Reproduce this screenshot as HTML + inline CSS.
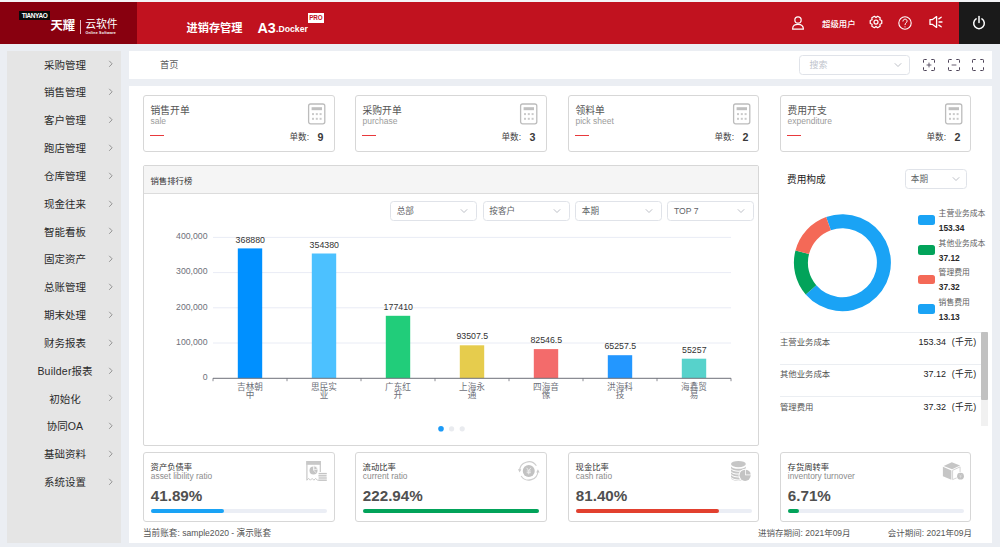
<!DOCTYPE html>
<html lang="zh-CN"><head><meta charset="utf-8"><title>天耀云软件 - 进销存管理</title>
<style>
*{box-sizing:border-box;margin:0;padding:0}
html,body{width:1000px;height:547px;overflow:hidden;background:#ebeef3;font-family:"Liberation Sans","Noto Sans CJK SC",sans-serif;color:#333}
.a{position:absolute}
.t{position:absolute;white-space:nowrap;line-height:14px;height:14px}
.hdr{left:0;top:2px;width:1000px;height:42px;background:#c1121f}
.logo{left:0;top:2px;width:137px;height:42px;background:#88000f}
.pwr{left:959px;top:2px;width:41px;height:42px;background:#1a1a1a}
.side{left:7px;top:50.500px;width:114.200px;height:492.800px;background:#e5e5e5}
.mi{position:absolute;left:7px;width:116px;text-align:center;font-size:10.5px;color:#2b2b2b;line-height:14px;height:14px;white-space:nowrap}
.panel{background:#fff}
.card{position:absolute;background:#fff;border:1px solid #d7d7d7;border-radius:3px}
.sel{position:absolute;background:#fff;border:1px solid #e0e3e9;border-radius:3.5px;height:20.200px}
.g{color:#999}
</style></head><body>

<div class="a" style="left:0;top:0;width:1000px;height:2px;background:#f4f4f6"></div>
<div class="a hdr"></div><div class="a logo"></div><div class="a pwr"></div>
<div class="a" style="left:19px;top:11px;width:31px;height:9px;background:#0a0a0a"></div>
<div class="t" style="left:19px;top:11px;width:31px;height:9px;line-height:9px;font-size:6.5px;font-weight:bold;color:#fff;text-align:center;letter-spacing:-0.45px">TIANYAO</div>
<div class="t" style="left:50.5px;top:19px;font-size:12.3px;font-weight:bold;color:#fff;line-height:15px;height:15px">天耀</div>
<div class="a" style="left:80px;top:20px;width:1px;height:14px;background:#e9b9bd"></div>
<div class="t" style="left:85.2px;top:17px;font-size:10.8px;color:#fff;line-height:15px;height:15px">云软件</div>
<div class="t" style="left:85.4px;top:30.5px;font-size:3.6px;font-weight:bold;color:#fff;line-height:5px;height:5px;letter-spacing:0.22px">Online Software</div>
<div class="t" style="left:186.5px;top:20.5px;font-size:11.2px;font-weight:bold;color:#fff;line-height:15px;height:15px">进销存管理</div>
<div class="t" style="left:257.5px;top:19px;font-size:14.3px;font-weight:bold;color:#fff;line-height:18px;height:18px">A3</div>
<div class="t" style="left:276px;top:23px;font-size:8.7px;font-weight:bold;color:#fff;line-height:12px;height:12px">.Docker</div>
<div class="a" style="left:307.6px;top:12.5px;width:16.7px;height:10px;background:#fff"></div>
<div class="t" style="left:307.6px;top:12.5px;width:16.7px;height:10px;line-height:10.5px;font-size:6.3px;font-weight:bold;color:#c1121f;text-align:center;letter-spacing:-0.1px">PRO</div>
<svg class="a" style="left:790px;top:15px" width="16" height="16" viewBox="0 0 16 16" fill="none" stroke="#fff" stroke-width="1.2"><circle cx="8" cy="5.050" r="3.150"/><path d="M2.6 14.2 C2.6 10.4 5 9.3 8 9.3 C11 9.3 13.4 10.4 13.4 14.2 Z" stroke-linejoin="round"/></svg>
<div class="t" style="left:822.100px;top:16.5px;font-size:8.4px;font-weight:500;color:#fff;line-height:14px;height:14px">超级用户</div>
<svg class="a" style="left:867.5px;top:14.2px" width="16" height="16" viewBox="0 0 16 16" fill="none" stroke="#fff" stroke-width="1.25" stroke-linejoin="round"><path d="M11.90 5.75 L13.76 6.52 L13.76 9.48 L11.90 10.25 L11.90 10.25 L12.16 12.25 L9.60 13.73 L8.00 12.50 L8.00 12.50 L6.40 13.73 L3.84 12.25 L4.10 10.25 L4.10 10.25 L2.24 9.48 L2.24 6.52 L4.10 5.75 L4.10 5.75 L3.84 3.75 L6.40 2.27 L8.00 3.50 L8.00 3.50 L9.60 2.27 L12.16 3.75 L11.90 5.75Z"/><circle cx="8" cy="8" r="2"/></svg>
<svg class="a" style="left:897.2px;top:14.6px" width="16" height="16" viewBox="0 0 16 16" fill="none" stroke="#fff" stroke-width="1.1"><circle cx="8" cy="8" r="6.2"/><path d="M5.9 6.100 C5.9 3.400 10.1 3.400 10.1 6.100 C10.1 7.800 8 7.800 8 9.700" stroke-linecap="round" stroke-width="1"/><circle cx="8" cy="11.800" r="0.6" fill="#fff" stroke="none"/></svg>
<svg class="a" style="left:927.5px;top:14.2px" width="16" height="16" viewBox="0 0 16 16" fill="none" stroke="#fff" stroke-width="1.3" stroke-linejoin="round"><path d="M2 5.6 H4.6 L8.6 2.6 V13.4 L4.6 10.4 H2 Z"/><path d="M11 8 H14 M10.8 4.9 L13.2 3.2 M10.8 11.1 L13.2 12.8" stroke-linecap="round"/></svg>
<svg class="a" style="left:970.7px;top:14.6px" width="16" height="16" viewBox="0 0 16 16" fill="none" stroke="#fff" stroke-width="1.5" stroke-linecap="round"><path d="M5.1 3.9 A5.3 5.3 0 1 0 10.9 3.9"/><path d="M8 1.6 V7.4"/></svg>
<div class="a side"></div>
<div class="mi" style="top:57.6px">采购管理</div>
<svg class="a" style="left:107px;top:59.4px" width="8" height="10" viewBox="0 0 8 10" fill="none" stroke="#8a8a8a" stroke-width="0.9"><path d="M2.2 1.8 L5.1 4.8 L2.2 7.8"/></svg>
<div class="mi" style="top:85.4px">销售管理</div>
<svg class="a" style="left:107px;top:87.2px" width="8" height="10" viewBox="0 0 8 10" fill="none" stroke="#8a8a8a" stroke-width="0.9"><path d="M2.2 1.8 L5.1 4.8 L2.2 7.8"/></svg>
<div class="mi" style="top:113.3px">客户管理</div>
<svg class="a" style="left:107px;top:115.1px" width="8" height="10" viewBox="0 0 8 10" fill="none" stroke="#8a8a8a" stroke-width="0.9"><path d="M2.2 1.8 L5.1 4.8 L2.2 7.8"/></svg>
<div class="mi" style="top:141.1px">跑店管理</div>
<svg class="a" style="left:107px;top:142.9px" width="8" height="10" viewBox="0 0 8 10" fill="none" stroke="#8a8a8a" stroke-width="0.9"><path d="M2.2 1.8 L5.1 4.8 L2.2 7.8"/></svg>
<div class="mi" style="top:168.9px">仓库管理</div>
<svg class="a" style="left:107px;top:170.7px" width="8" height="10" viewBox="0 0 8 10" fill="none" stroke="#8a8a8a" stroke-width="0.9"><path d="M2.2 1.8 L5.1 4.8 L2.2 7.8"/></svg>
<div class="mi" style="top:196.7px">现金往来</div>
<svg class="a" style="left:107px;top:198.5px" width="8" height="10" viewBox="0 0 8 10" fill="none" stroke="#8a8a8a" stroke-width="0.9"><path d="M2.2 1.8 L5.1 4.8 L2.2 7.8"/></svg>
<div class="mi" style="top:224.6px">智能看板</div>
<svg class="a" style="left:107px;top:226.4px" width="8" height="10" viewBox="0 0 8 10" fill="none" stroke="#8a8a8a" stroke-width="0.9"><path d="M2.2 1.8 L5.1 4.8 L2.2 7.8"/></svg>
<div class="mi" style="top:252.4px">固定资产</div>
<svg class="a" style="left:107px;top:254.2px" width="8" height="10" viewBox="0 0 8 10" fill="none" stroke="#8a8a8a" stroke-width="0.9"><path d="M2.2 1.8 L5.1 4.8 L2.2 7.8"/></svg>
<div class="mi" style="top:280.2px">总账管理</div>
<svg class="a" style="left:107px;top:282.0px" width="8" height="10" viewBox="0 0 8 10" fill="none" stroke="#8a8a8a" stroke-width="0.9"><path d="M2.2 1.8 L5.1 4.8 L2.2 7.8"/></svg>
<div class="mi" style="top:308.1px">期末处理</div>
<svg class="a" style="left:107px;top:309.9px" width="8" height="10" viewBox="0 0 8 10" fill="none" stroke="#8a8a8a" stroke-width="0.9"><path d="M2.2 1.8 L5.1 4.8 L2.2 7.8"/></svg>
<div class="mi" style="top:335.9px">财务报表</div>
<svg class="a" style="left:107px;top:337.7px" width="8" height="10" viewBox="0 0 8 10" fill="none" stroke="#8a8a8a" stroke-width="0.9"><path d="M2.2 1.8 L5.1 4.8 L2.2 7.8"/></svg>
<div class="mi" style="top:363.7px"><span style="letter-spacing:0.22px">Builder</span>报表</div>
<svg class="a" style="left:107px;top:365.5px" width="8" height="10" viewBox="0 0 8 10" fill="none" stroke="#8a8a8a" stroke-width="0.9"><path d="M2.2 1.8 L5.1 4.8 L2.2 7.8"/></svg>
<div class="mi" style="top:391.6px">初始化</div>
<svg class="a" style="left:107px;top:393.4px" width="8" height="10" viewBox="0 0 8 10" fill="none" stroke="#8a8a8a" stroke-width="0.9"><path d="M2.2 1.8 L5.1 4.8 L2.2 7.8"/></svg>
<div class="mi" style="top:419.4px">协同<span style="letter-spacing:0.2px">OA</span></div>
<svg class="a" style="left:107px;top:421.2px" width="8" height="10" viewBox="0 0 8 10" fill="none" stroke="#8a8a8a" stroke-width="0.9"><path d="M2.2 1.8 L5.1 4.8 L2.2 7.8"/></svg>
<div class="mi" style="top:447.2px">基础资料</div>
<svg class="a" style="left:107px;top:449.0px" width="8" height="10" viewBox="0 0 8 10" fill="none" stroke="#8a8a8a" stroke-width="0.9"><path d="M2.2 1.8 L5.1 4.8 L2.2 7.8"/></svg>
<div class="mi" style="top:475.0px">系统设置</div>
<svg class="a" style="left:107px;top:476.8px" width="8" height="10" viewBox="0 0 8 10" fill="none" stroke="#8a8a8a" stroke-width="0.9"><path d="M2.2 1.8 L5.1 4.8 L2.2 7.8"/></svg>
<div class="a panel" style="left:129px;top:51px;width:863px;height:28px"></div>
<div class="t" style="left:160px;top:58px;font-size:9.2px;color:#606060">首页</div>
<div class="sel" style="left:798.5px;top:55.100px;width:111.300px;height:20px"></div>
<div class="t" style="left:809.5px;top:58.3px;font-size:9px;color:#c0c4cc">搜索</div>
<svg class="a" style="left:892.7px;top:61.0px" width="10" height="8" viewBox="0 0 10 8" fill="none" stroke="#b4b8c0" stroke-width="0.9"><path d="M1.8 2.3 L5 5.5 L8.2 2.3"/></svg>
<svg class="a" style="left:922.1px;top:57.7px" width="14" height="14" viewBox="0 0 14 14" fill="none" stroke="#4a4055" stroke-width="1" stroke-linejoin="round"><path d="M1.500 4.700 V2.300 Q1.500 1.500 2.300 1.500 H4.700 M9.300 1.500 H11.700 Q12.500 1.500 12.500 2.300 V4.700 M12.500 9.300 V11.700 Q12.500 12.500 11.700 12.500 H9.300 M4.700 12.500 H2.300 Q1.500 12.500 1.500 11.700 V9.300"/><path d="M4.600 7 H9.400 M7 4.600 V9.400" stroke-width="0.85"/></svg>
<svg class="a" style="left:946.7px;top:57.7px" width="14" height="14" viewBox="0 0 14 14" fill="none" stroke="#4a4055" stroke-width="1" stroke-linejoin="round"><path d="M1.500 4.700 V2.300 Q1.500 1.500 2.300 1.500 H4.700 M9.300 1.500 H11.700 Q12.500 1.500 12.500 2.300 V4.700 M12.500 9.300 V11.700 Q12.500 12.500 11.700 12.500 H9.300 M4.700 12.500 H2.300 Q1.500 12.500 1.500 11.700 V9.300"/><path d="M4.600 7 H9.400" stroke-width="0.85"/></svg>
<svg class="a" style="left:970.7px;top:57.7px" width="14" height="14" viewBox="0 0 14 14" fill="none" stroke="#4a4055" stroke-width="1" stroke-linejoin="round"><path d="M1.500 4.700 V2.300 Q1.500 1.500 2.300 1.500 H4.700 M9.300 1.500 H11.700 Q12.500 1.500 12.500 2.300 V4.700 M12.500 9.300 V11.700 Q12.500 12.500 11.700 12.500 H9.300 M4.700 12.500 H2.300 Q1.500 12.500 1.500 11.700 V9.300"/></svg>
<div class="a panel" style="left:129px;top:86px;width:863px;height:457px"></div>
<div class="card" style="left:143px;top:95px;width:192.0px;height:57px"></div>
<div class="t" style="left:150.5px;top:103.5px;font-size:9.8px;color:#555">销售开单</div>
<div class="t g" style="left:150.5px;top:114.1px;font-size:8.5px;color:#9c9c9c">sale</div>
<div class="a" style="left:150.4px;top:134.6px;width:14px;height:1.6px;background:#e8393c"></div>
<svg class="a" style="left:305.8px;top:101px" width="22" height="26" viewBox="0 0 22 26"><rect x="2.6" y="3" width="16.200" height="19.800" rx="2" fill="none" stroke="#bcbcbc" stroke-width="1.300"/><rect x="5.6" y="6.200" width="10.400" height="3" fill="#c0c0c0"/><g fill="#cacaca"><rect x="6" y="12.100" width="2" height="2"/><rect x="9.800" y="12.100" width="2" height="2"/><rect x="13.600" y="12.100" width="2" height="2"/><rect x="6" y="16.800" width="2" height="2"/><rect x="9.800" y="16.800" width="2" height="2"/><rect x="13.600" y="16.800" width="2" height="2"/></g></svg>
<div class="t" style="left:289.5px;top:130.3px;font-size:8.6px;color:#444">单数:</div>
<div class="t" style="left:317.6px;top:128.5px;font-size:10.700px;font-weight:bold;color:#3a3a3a;line-height:16px;height:16px">9</div>
<div class="card" style="left:355px;top:95px;width:192.0px;height:57px"></div>
<div class="t" style="left:362.5px;top:103.5px;font-size:9.8px;color:#555">采购开单</div>
<div class="t g" style="left:362.5px;top:114.1px;font-size:8.5px;color:#9c9c9c">purchase</div>
<div class="a" style="left:362.4px;top:134.6px;width:14px;height:1.6px;background:#e8393c"></div>
<svg class="a" style="left:517.8px;top:101px" width="22" height="26" viewBox="0 0 22 26"><rect x="2.6" y="3" width="16.200" height="19.800" rx="2" fill="none" stroke="#bcbcbc" stroke-width="1.300"/><rect x="5.6" y="6.200" width="10.400" height="3" fill="#c0c0c0"/><g fill="#cacaca"><rect x="6" y="12.100" width="2" height="2"/><rect x="9.800" y="12.100" width="2" height="2"/><rect x="13.600" y="12.100" width="2" height="2"/><rect x="6" y="16.800" width="2" height="2"/><rect x="9.800" y="16.800" width="2" height="2"/><rect x="13.600" y="16.800" width="2" height="2"/></g></svg>
<div class="t" style="left:501.5px;top:130.3px;font-size:8.6px;color:#444">单数:</div>
<div class="t" style="left:529.6px;top:128.5px;font-size:10.700px;font-weight:bold;color:#3a3a3a;line-height:16px;height:16px">3</div>
<div class="card" style="left:568px;top:95px;width:191.0px;height:57px"></div>
<div class="t" style="left:575.5px;top:103.5px;font-size:9.8px;color:#555">领料单</div>
<div class="t g" style="left:575.5px;top:114.1px;font-size:8.5px;color:#9c9c9c">pick sheet</div>
<div class="a" style="left:575.4px;top:134.6px;width:14px;height:1.6px;background:#e8393c"></div>
<svg class="a" style="left:730.8px;top:101px" width="22" height="26" viewBox="0 0 22 26"><rect x="2.6" y="3" width="16.200" height="19.800" rx="2" fill="none" stroke="#bcbcbc" stroke-width="1.300"/><rect x="5.6" y="6.200" width="10.400" height="3" fill="#c0c0c0"/><g fill="#cacaca"><rect x="6" y="12.100" width="2" height="2"/><rect x="9.800" y="12.100" width="2" height="2"/><rect x="13.600" y="12.100" width="2" height="2"/><rect x="6" y="16.800" width="2" height="2"/><rect x="9.800" y="16.800" width="2" height="2"/><rect x="13.600" y="16.800" width="2" height="2"/></g></svg>
<div class="t" style="left:714.5px;top:130.3px;font-size:8.6px;color:#444">单数:</div>
<div class="t" style="left:742.6px;top:128.5px;font-size:10.700px;font-weight:bold;color:#3a3a3a;line-height:16px;height:16px">2</div>
<div class="card" style="left:780px;top:95px;width:191.3px;height:57px"></div>
<div class="t" style="left:787.5px;top:103.5px;font-size:9.8px;color:#555">费用开支</div>
<div class="t g" style="left:787.5px;top:114.1px;font-size:8.5px;color:#9c9c9c">expenditure</div>
<div class="a" style="left:787.4px;top:134.6px;width:14px;height:1.6px;background:#e8393c"></div>
<svg class="a" style="left:942.8px;top:101px" width="22" height="26" viewBox="0 0 22 26"><rect x="2.6" y="3" width="16.200" height="19.800" rx="2" fill="none" stroke="#bcbcbc" stroke-width="1.300"/><rect x="5.6" y="6.200" width="10.400" height="3" fill="#c0c0c0"/><g fill="#cacaca"><rect x="6" y="12.100" width="2" height="2"/><rect x="9.800" y="12.100" width="2" height="2"/><rect x="13.600" y="12.100" width="2" height="2"/><rect x="6" y="16.800" width="2" height="2"/><rect x="9.800" y="16.800" width="2" height="2"/><rect x="13.600" y="16.800" width="2" height="2"/></g></svg>
<div class="t" style="left:926.5px;top:130.3px;font-size:8.6px;color:#444">单数:</div>
<div class="t" style="left:954.6px;top:128.5px;font-size:10.700px;font-weight:bold;color:#3a3a3a;line-height:16px;height:16px">2</div>
<div class="card" style="left:143px;top:165px;width:616px;height:281px;border-radius:2px"></div>
<div class="a" style="left:144px;top:166px;width:614px;height:28px;background:#f5f5f5;border-bottom:1px solid #dcdcdc"></div>
<div class="t" style="left:150.5px;top:173.500px;font-size:8.4px;color:#333">销售排行榜</div>
<div class="sel" style="left:390.2px;top:200.500px;width:86.800px"></div>
<div class="t" style="left:396.7px;top:203.6px;font-size:8.6px;color:#606266">总部</div>
<svg class="a" style="left:459.2px;top:206.7px" width="10" height="8" viewBox="0 0 10 8" fill="none" stroke="#b4b8c0" stroke-width="0.9"><path d="M1.8 2.3 L5 5.5 L8.2 2.3"/></svg>
<div class="sel" style="left:482.8px;top:200.500px;width:86.800px"></div>
<div class="t" style="left:489.3px;top:203.6px;font-size:8.6px;color:#606266">按客户</div>
<svg class="a" style="left:551.8px;top:206.7px" width="10" height="8" viewBox="0 0 10 8" fill="none" stroke="#b4b8c0" stroke-width="0.9"><path d="M1.8 2.3 L5 5.5 L8.2 2.3"/></svg>
<div class="sel" style="left:575.3px;top:200.500px;width:86.800px"></div>
<div class="t" style="left:581.8px;top:203.6px;font-size:8.6px;color:#606266">本期</div>
<svg class="a" style="left:644.3px;top:206.7px" width="10" height="8" viewBox="0 0 10 8" fill="none" stroke="#b4b8c0" stroke-width="0.9"><path d="M1.8 2.3 L5 5.5 L8.2 2.3"/></svg>
<div class="sel" style="left:667.4px;top:200.500px;width:86.800px"></div>
<div class="t" style="left:673.9px;top:203.6px;font-size:8.6px;color:#606266">TOP 7</div>
<svg class="a" style="left:736.4px;top:206.7px" width="10" height="8" viewBox="0 0 10 8" fill="none" stroke="#b4b8c0" stroke-width="0.9"><path d="M1.8 2.3 L5 5.5 L8.2 2.3"/></svg>
<svg class="a" style="left:0;top:0" width="1000" height="547" viewBox="0 0 1000 547" font-family='&quot;Liberation Sans&quot;, &quot;Noto Sans CJK SC&quot;, sans-serif'><path d="M213 343.0 H731" stroke="#e9ecf5" stroke-width="1" fill="none"/><path d="M213 307.8 H731" stroke="#e9ecf5" stroke-width="1" fill="none"/><path d="M213 272.6 H731" stroke="#e9ecf5" stroke-width="1" fill="none"/><path d="M213 237.4 H731" stroke="#e9ecf5" stroke-width="1" fill="none"/><text x="207.500" y="380.0" font-size="8.7" fill="#6e7079" text-anchor="end">0</text><text x="207.500" y="344.8" font-size="8.7" fill="#6e7079" text-anchor="end">100,000</text><text x="207.500" y="309.6" font-size="8.7" fill="#6e7079" text-anchor="end">200,000</text><text x="207.500" y="274.4" font-size="8.7" fill="#6e7079" text-anchor="end">300,000</text><text x="207.500" y="239.2" font-size="8.7" fill="#6e7079" text-anchor="end">400,000</text><rect x="237.8" y="248.4" width="24.4" height="129.8" fill="#0090ff"/><text x="250.3" y="242.5" font-size="8.8" fill="#333" text-anchor="middle">368880</text><text x="250.0" y="389.8" font-size="8.6" fill="#6e7079" text-anchor="middle">吉林朝</text><text x="250.0" y="398.1" font-size="8.6" fill="#6e7079" text-anchor="middle">中</text><rect x="311.8" y="253.5" width="24.4" height="124.7" fill="#4cc1ff"/><text x="324.3" y="247.6" font-size="8.8" fill="#333" text-anchor="middle">354380</text><text x="324.0" y="389.8" font-size="8.6" fill="#6e7079" text-anchor="middle">思民实</text><text x="324.0" y="398.1" font-size="8.6" fill="#6e7079" text-anchor="middle">业</text><rect x="385.8" y="315.8" width="24.4" height="62.4" fill="#21cd7a"/><text x="398.3" y="309.9" font-size="8.8" fill="#333" text-anchor="middle">177410</text><text x="398.0" y="389.8" font-size="8.6" fill="#6e7079" text-anchor="middle">广东红</text><text x="398.0" y="398.1" font-size="8.6" fill="#6e7079" text-anchor="middle">升</text><rect x="459.8" y="345.3" width="24.4" height="32.9" fill="#e6cc4d"/><text x="472.3" y="339.4" font-size="8.8" fill="#333" text-anchor="middle">93507.5</text><text x="472.0" y="389.8" font-size="8.6" fill="#6e7079" text-anchor="middle">上海永</text><text x="472.0" y="398.1" font-size="8.6" fill="#6e7079" text-anchor="middle">通</text><rect x="533.8" y="349.1" width="24.4" height="29.1" fill="#f36b6b"/><text x="546.3" y="343.2" font-size="8.8" fill="#333" text-anchor="middle">82546.5</text><text x="546.0" y="389.8" font-size="8.6" fill="#6e7079" text-anchor="middle">四海音</text><text x="546.0" y="398.1" font-size="8.6" fill="#6e7079" text-anchor="middle">像</text><rect x="607.8" y="355.2" width="24.4" height="23.0" fill="#2397ff"/><text x="620.3" y="349.3" font-size="8.8" fill="#333" text-anchor="middle">65257.5</text><text x="620.0" y="389.8" font-size="8.6" fill="#6e7079" text-anchor="middle">洪海科</text><text x="620.0" y="398.1" font-size="8.6" fill="#6e7079" text-anchor="middle">技</text><rect x="681.8" y="358.7" width="24.4" height="19.5" fill="#57d2cb"/><text x="694.3" y="352.8" font-size="8.8" fill="#333" text-anchor="middle">55257</text><text x="694.0" y="389.8" font-size="8.6" fill="#6e7079" text-anchor="middle">海鑫贸</text><text x="694.0" y="398.1" font-size="8.6" fill="#6e7079" text-anchor="middle">易</text><rect x="213" y="377.800" width="518" height="1" fill="#6e7079"/><path d="M213.0 378.2 V381.2" stroke="#6e7079" stroke-width="0.8" fill="none"/><path d="M287.0 378.2 V381.2" stroke="#6e7079" stroke-width="0.8" fill="none"/><path d="M361.0 378.2 V381.2" stroke="#6e7079" stroke-width="0.8" fill="none"/><path d="M435.0 378.2 V381.2" stroke="#6e7079" stroke-width="0.8" fill="none"/><path d="M509.0 378.2 V381.2" stroke="#6e7079" stroke-width="0.8" fill="none"/><path d="M583.0 378.2 V381.2" stroke="#6e7079" stroke-width="0.8" fill="none"/><path d="M657.0 378.2 V381.2" stroke="#6e7079" stroke-width="0.8" fill="none"/><path d="M731.0 378.2 V381.2" stroke="#6e7079" stroke-width="0.8" fill="none"/><circle cx="441" cy="428.800" r="2.800" fill="#1b9af7"/><circle cx="451.600" cy="428.800" r="2.600" fill="#e9ebef"/><circle cx="462.200" cy="428.800" r="2.600" fill="#e9ebef"/><path d="M826.11 217.02 A48.5 48.5 0 1 1 805.72 294.43 L816.31 285.27 A34.5 34.5 0 1 0 830.82 230.20 Z" fill="#1aa3f5"/><path d="M805.72 294.43 A48.5 48.5 0 0 1 795.47 250.47 L809.02 254.00 A34.5 34.5 0 0 0 816.31 285.27 Z" fill="#02a35a"/><path d="M795.47 250.47 A48.5 48.5 0 0 1 826.11 217.02 L830.82 230.20 A34.5 34.5 0 0 0 809.02 254.00 Z" fill="#f46957"/></svg>
<div class="a" style="left:918px;top:215.4px;width:17px;height:9.6px;border-radius:2.5px;background:#1aa3f5"></div>
<div class="t" style="left:938.6px;top:206.9px;font-size:7.8px;color:#606060">主营业务成本</div>
<div class="t" style="left:938.8px;top:221.2px;font-size:8.4px;color:#2a2a2a;font-weight:bold">153.34</div>
<div class="a" style="left:918px;top:245.0px;width:17px;height:9.6px;border-radius:2.5px;background:#02a35a"></div>
<div class="t" style="left:938.6px;top:236.5px;font-size:7.8px;color:#606060">其他业务成本</div>
<div class="t" style="left:938.8px;top:250.8px;font-size:8.4px;color:#2a2a2a;font-weight:bold">37.12</div>
<div class="a" style="left:918px;top:274.5px;width:17px;height:9.6px;border-radius:2.5px;background:#f46957"></div>
<div class="t" style="left:938.6px;top:266.0px;font-size:7.8px;color:#606060">管理费用</div>
<div class="t" style="left:938.8px;top:280.3px;font-size:8.4px;color:#2a2a2a;font-weight:bold">37.32</div>
<div class="a" style="left:918px;top:304.1px;width:17px;height:9.6px;border-radius:2.5px;background:#1aa3f5"></div>
<div class="t" style="left:938.6px;top:295.6px;font-size:7.8px;color:#606060">销售费用</div>
<div class="t" style="left:938.8px;top:309.9px;font-size:8.4px;color:#2a2a2a;font-weight:bold">13.13</div>
<div class="t" style="left:787px;top:172.5px;font-size:9.7px;color:#1a1a1a;font-weight:400">费用构成</div>
<div class="sel" style="left:905px;top:168.900px;width:62px;height:20px"></div>
<div class="t" style="left:910.8px;top:172.300px;font-size:8.6px;color:#606266">本期</div>
<svg class="a" style="left:950.5px;top:175.3px" width="10" height="8" viewBox="0 0 10 8" fill="none" stroke="#b4b8c0" stroke-width="0.9"><path d="M1.8 2.3 L5 5.5 L8.2 2.3"/></svg>
<div class="a" style="left:780px;top:332.0px;width:201px;height:1px;background:#ebeef2"></div>
<div class="t" style="left:780px;top:335.3px;font-size:8.4px;color:#555">主营业务成本</div>
<div class="t" style="left:880px;width:66px;text-align:right;top:335.3px;font-size:9px;color:#222">153.34</div>
<div class="t" style="left:951.8px;top:335.3px;font-size:8.8px;color:#222;letter-spacing:0.3px">(千元)</div>
<div class="a" style="left:780px;top:364.1px;width:201px;height:1px;background:#ebeef2"></div>
<div class="t" style="left:780px;top:367.4px;font-size:8.4px;color:#555">其他业务成本</div>
<div class="t" style="left:880px;width:66px;text-align:right;top:367.4px;font-size:9px;color:#222">37.12</div>
<div class="t" style="left:951.8px;top:367.4px;font-size:8.8px;color:#222;letter-spacing:0.3px">(千元)</div>
<div class="a" style="left:780px;top:396.2px;width:201px;height:1px;background:#ebeef2"></div>
<div class="t" style="left:780px;top:399.5px;font-size:8.4px;color:#555">管理费用</div>
<div class="t" style="left:880px;width:66px;text-align:right;top:399.5px;font-size:9px;color:#222">37.32</div>
<div class="t" style="left:951.8px;top:399.5px;font-size:8.8px;color:#222;letter-spacing:0.3px">(千元)</div>
<div class="a" style="left:981.4px;top:332px;width:6.6px;height:93.6px;background:#f1f1f1"></div>
<div class="a" style="left:981.4px;top:332px;width:6.6px;height:68.4px;background:#c1c1c1;border-radius:1px"></div>
<div class="card" style="left:143px;top:451.500px;width:192.0px;height:70.300px"></div>
<div class="t" style="left:150.6px;top:460.1px;font-size:8.300px;color:#333">资产负债率</div>
<div class="t" style="left:150.8px;top:469.4px;font-size:8.4px;color:#8c8c8c">asset libility ratio</div>
<div class="t" style="left:150.8px;top:485.5px;font-size:15.2px;font-weight:bold;color:#505050;line-height:20px;height:20px">41.89%</div>
<div class="a" style="left:150.7px;top:508.9px;width:176px;height:3.7px;border-radius:2px;background:#ebeef5"></div>
<div class="a" style="left:150.7px;top:508.9px;width:73.7px;height:3.7px;border-radius:2px;background:#1aa3f5"></div>
<div class="card" style="left:355px;top:451.500px;width:192.0px;height:70.300px"></div>
<div class="t" style="left:362.6px;top:460.1px;font-size:8.300px;color:#333">流动比率</div>
<div class="t" style="left:362.8px;top:469.4px;font-size:8.4px;color:#8c8c8c">current ratio</div>
<div class="t" style="left:362.8px;top:485.5px;font-size:15.2px;font-weight:bold;color:#505050;line-height:20px;height:20px">222.94%</div>
<div class="a" style="left:362.7px;top:508.9px;width:176px;height:3.7px;border-radius:2px;background:#ebeef5"></div>
<div class="a" style="left:362.7px;top:508.9px;width:176.0px;height:3.7px;border-radius:2px;background:#02a35a"></div>
<div class="card" style="left:568px;top:451.500px;width:191.0px;height:70.300px"></div>
<div class="t" style="left:575.6px;top:460.1px;font-size:8.300px;color:#333">现金比率</div>
<div class="t" style="left:575.8px;top:469.4px;font-size:8.4px;color:#8c8c8c">cash ratio</div>
<div class="t" style="left:575.8px;top:485.5px;font-size:15.2px;font-weight:bold;color:#505050;line-height:20px;height:20px">81.40%</div>
<div class="a" style="left:575.7px;top:508.9px;width:176px;height:3.7px;border-radius:2px;background:#ebeef5"></div>
<div class="a" style="left:575.7px;top:508.9px;width:143.3px;height:3.7px;border-radius:2px;background:#e2402f"></div>
<div class="card" style="left:780px;top:451.500px;width:191.3px;height:70.300px"></div>
<div class="t" style="left:787.6px;top:460.1px;font-size:8.300px;color:#333">存货周转率</div>
<div class="t" style="left:787.8px;top:469.4px;font-size:8.4px;color:#8c8c8c">inventory turnover</div>
<div class="t" style="left:787.8px;top:485.5px;font-size:15.2px;font-weight:bold;color:#505050;line-height:20px;height:20px">6.71%</div>
<div class="a" style="left:787.7px;top:508.9px;width:176px;height:3.7px;border-radius:2px;background:#ebeef5"></div>
<div class="a" style="left:787.7px;top:508.9px;width:11.8px;height:3.7px;border-radius:2px;background:#02a35a"></div>
<svg class="a" style="left:300px;top:455px" width="32" height="30" viewBox="300 455 32 30"><path d="M306.900 480.200 V461.600 H320.300 V472" fill="none" stroke="#c8c8c8" stroke-width="1.2"/><rect x="306.350" y="461.100" width="14.500" height="3.700" fill="#c8c8c8"/><path d="M306.900 480.200 l1.750 -1.800 1.750 1.800 1.750 -1.800 1.750 1.800 1.750 -1.800 1.750 1.800 1.200 0" fill="none" stroke="#c8c8c8" stroke-width="1"/><circle cx="313.500" cy="470.400" r="4" fill="#c4c4c4"/><path d="M313.900 470.000 V465.800 A4.200 4.200 0 0 1 317.600 469.000 Z" fill="#c4c4c4" stroke="#fff" stroke-width="0.7"/><path d="M313.500 466.400 V470.400 L316.300 472.800" fill="none" stroke="#fff" stroke-width="0.6"/><g fill="#c4c4c4"><rect x="318.600" y="472.900" width="8.200" height="1.400"/><rect x="318.400" y="475.100" width="8.200" height="1.400"/><rect x="318.600" y="477.300" width="8.200" height="1.400"/><rect x="318.400" y="479.500" width="8.400" height="1.400"/></g></svg>
<svg class="a" style="left:514px;top:456px" width="30" height="30" viewBox="514 456 30 30"><circle cx="528.750" cy="470.900" r="6" fill="#c2c2c2"/><path d="M526.600 467.800 L528.750 470.600 L530.900 467.800 M528.750 470.600 V474.400 M526.700 471 H530.800 M526.700 472.700 H530.800" stroke="#f1f1f1" stroke-width="0.9" fill="none"/><path d="M519.600 470.900 A9.200 9.200 0 0 1 536.400 465.800" fill="none" stroke="#cecece" stroke-width="1.1"/><path d="M537.900 470.900 A9.200 9.200 0 0 1 521.100 476" fill="none" stroke="#cecece" stroke-width="1.1"/><path d="M517.900 469.200 L519.700 472.600 L521.300 469.200 Z M536.200 472.600 L537.900 469.200 L539.600 472.600 Z" fill="#cbcbcb"/></svg>
<svg class="a" style="left:726px;top:456px" width="30" height="30" viewBox="726 456 30 30"><g fill="#c6c6c6"><ellipse cx="738.400" cy="464.100" rx="7.400" ry="3.200"/><path d="M731 466.400 c1.600 3.200 13.200 3.200 14.800 0 v1.900 c-1.600 3.200-13.200 3.200-14.800 0Z"/><path d="M731 469.300 c1.600 3.200 13.200 3.200 14.800 0 v1.900 c-1.600 3.200-13.200 3.200-14.800 0Z"/><path d="M731 472.200 c1.600 3.200 13.200 3.200 14.800 0 v1.900 c-1.600 3.200-13.200 3.200-14.800 0Z"/><path d="M731 475.100 c1.600 3.200 13.200 3.200 14.800 0 v1.900 c-1.600 3.200-13.200 3.200-14.800 0Z"/><path d="M731 478 c1.600 3.200 13.200 3.200 14.800 0 v0.500 c-1.600 3.100-13.200 3.100-14.800 0Z"/></g><circle cx="745.100" cy="475.300" r="6.500" fill="#fff"/><circle cx="745.100" cy="475.300" r="5.600" fill="#c4c4c4"/><path d="M745.100 475.300 V469.200 H751.500 V475.300Z" fill="#fff"/><path d="M745.900 474.500 V469.700 A5.400 5.400 0 0 1 750.700 474.500Z" fill="#c4c4c4"/></svg>
<svg class="a" style="left:938px;top:456px" width="30" height="30" viewBox="938 456 30 30"><path d="M943.700 465.900 L951.800 462.300 L960.100 465.600 L952.100 469.200Z" fill="#c6c6c6"/><path d="M942.900 466.800 L951.400 470.400 V479.800 L942.900 476.300Z" fill="#c6c6c6"/><path d="M952.600 470.300 L960.100 466.900 V473 M952.600 470.300 V479.600 L957 477.700" fill="none" stroke="#cfcfcf" stroke-width="0.9"/><circle cx="960.500" cy="476.200" r="4.100" fill="#fff"/><circle cx="960.500" cy="476.200" r="3.400" fill="#c2c2c2"/><path d="M959.300 474.400 L960.500 476 L961.700 474.400 M960.500 476 V478.200 M959.400 476.400 H961.600" stroke="#ddd" stroke-width="0.6" fill="none"/></svg>
<div class="t" style="left:143px;top:525.8px;font-size:8.6px;color:#555">当前账套: sample2020 - 演示账套</div>
<div class="t" style="left:758px;top:525.800px;font-size:8.5px;color:#555">进销存期间: 2021年09月</div>
<div class="t" style="left:887.8px;top:525.800px;font-size:8.5px;color:#555">会计期间: 2021年09月</div>
</body></html>
